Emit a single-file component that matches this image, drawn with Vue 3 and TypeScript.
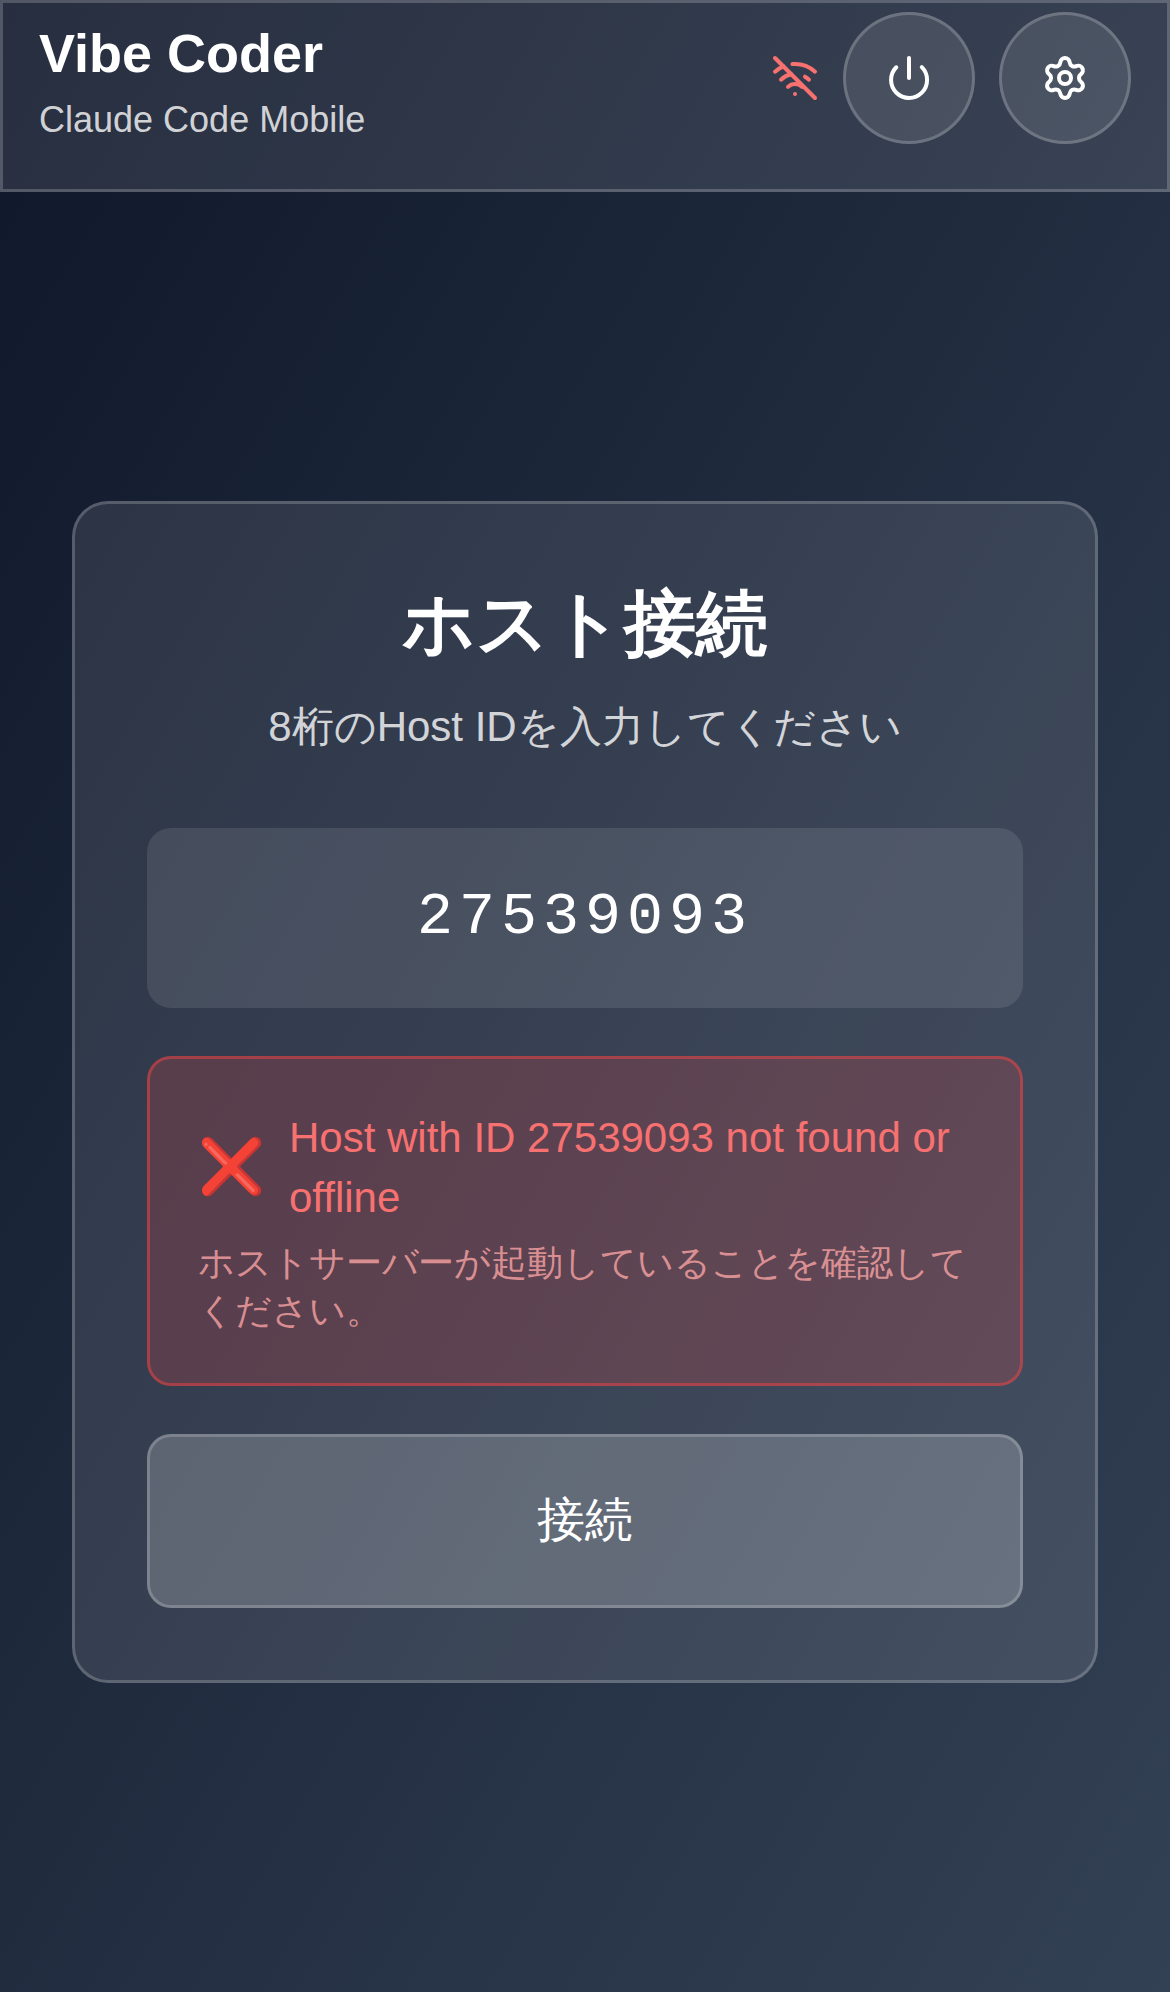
<script setup lang="ts">
import { ref } from 'vue'

const hostId = ref<string>('27539093')
const error = ref<string>(`Host with ID ${hostId.value} not found or offline`)
const hint = 'ホストサーバーが起動していることを確認してください。'
</script>

<template>
  <div class="app">
    <header class="header glass">
      <div class="brand">
        <h1 class="brand-name">Vibe Coder</h1>
        <p class="brand-sub">Claude Code Mobile</p>
      </div>
      <div class="actions">
        <svg class="icon offline" viewBox="0 0 24 24">
          <path d="M12 20h.01" />
          <path d="M8.5 16.429a5 5 0 0 1 7 0" />
          <path d="M5 12.859a10 10 0 0 1 5.17-2.69" />
          <path d="M19 12.859a10 10 0 0 0-2.007-1.523" />
          <path d="M2 8.82a15 15 0 0 1 4.177-2.643" />
          <path d="M22 8.82a15 15 0 0 0-11.288-3.764" />
          <path d="m2 2 20 20" />
        </svg>
        <button class="round glass" type="button" aria-label="Power">
          <svg class="icon" viewBox="0 0 24 24">
            <path d="M12 2v10" />
            <path d="M18.4 6.6a9 9 0 1 1-12.77.04" />
          </svg>
        </button>
        <button class="round glass" type="button" aria-label="Settings">
          <svg class="icon" viewBox="0 0 24 24">
            <path d="M9.671 4.136a2.34 2.34 0 0 1 4.659 0 2.34 2.34 0 0 0 3.319 1.915 2.34 2.34 0 0 1 2.33 4.033 2.34 2.34 0 0 0 0 3.831 2.34 2.34 0 0 1-2.33 4.033 2.34 2.34 0 0 0-3.319 1.915 2.34 2.34 0 0 1-4.659 0 2.34 2.34 0 0 0-3.32-1.915 2.34 2.34 0 0 1-2.33-4.033 2.34 2.34 0 0 0 0-3.831A2.34 2.34 0 0 1 6.35 6.051a2.34 2.34 0 0 0 3.319-1.915" />
            <circle cx="12" cy="12" r="3" />
          </svg>
        </button>
      </div>
    </header>

    <main class="main">
      <section class="card glass">
        <h2 class="title">ホスト接続</h2>
        <p class="lead">8桁のHost IDを入力してください</p>
        <input v-model="hostId" class="host-input" type="text" maxlength="8" />
        <div class="alert">
          <div class="alert-row">
            <span class="alert-icon">❌</span>
            <p class="alert-text">{{ error }}</p>
          </div>
          <p class="alert-hint">{{ hint }}</p>
        </div>
        <button class="connect" type="button">接続</button>
      </section>
    </main>
  </div>
</template>

<style>
body {
  background: #0f172a;
}
</style>

<style scoped>
.app {
  display: flex;
  flex-direction: column;
  height: 1992px;
  overflow: hidden;
  color: #fff;
  font-family: 'Liberation Sans', sans-serif;
  background: linear-gradient(to bottom right, #0f172a, #334155);
}
.app *,
.app {
  box-sizing: border-box;
}
h1,
h2,
p {
  margin: 0;
}
.glass {
  background: rgba(255, 255, 255, 0.1);
  border: 3px solid rgba(255, 255, 255, 0.2);
}
.header {
  display: flex;
  justify-content: space-between;
  align-items: flex-start;
  flex: none;
  height: 192px;
  padding: 9px 36px 45px;
}
.brand-name {
  font-size: 54px;
  line-height: 82px;
  font-weight: 700;
}
.brand-sub {
  font-size: 36px;
  line-height: 51px;
  color: rgba(255, 255, 255, 0.8);
}
.actions {
  display: flex;
  align-items: center;
  gap: 24px;
}
.icon {
  display: block;
  width: 48px;
  height: 48px;
  fill: none;
  stroke: currentColor;
  stroke-width: 2;
  stroke-linecap: round;
  stroke-linejoin: round;
}
.offline {
  color: #f87171;
}
.round {
  display: flex;
  align-items: center;
  justify-content: center;
  width: 132px;
  height: 132px;
  padding: 0;
  border-radius: 50%;
  color: #fff;
}
.main {
  display: flex;
  flex: 1;
  align-items: center;
  padding: 0 72px;
}
.card {
  display: flex;
  flex-direction: column;
  width: 100%;
  padding: 72px;
  border-radius: 36px;
}
.title {
  height: 96px;
  font-size: 72px;
  line-height: 94px;
  font-weight: 700;
  text-align: center;
}
.lead {
  height: 60px;
  margin: 24px 0 72px;
  font-size: 42px;
  line-height: 61px;
  text-align: center;
  color: rgba(255, 255, 255, 0.8);
}
.host-input {
  width: 100%;
  height: 180px;
  padding: 0 48px 2px;
  border: 0;
  outline: 0;
  border-radius: 24px;
  background: rgba(255, 255, 255, 0.1);
  color: #fff;
  font-family: 'Liberation Mono', monospace;
  font-size: 60px;
  letter-spacing: 6px;
  text-align: center;
}
.alert {
  height: 330px;
  margin: 48px 0;
  padding: 48px;
  border: 3px solid rgba(239, 68, 68, 0.5);
  border-radius: 24px;
  background: rgba(239, 68, 68, 0.2);
}
.alert-row {
  display: flex;
  align-items: center;
  gap: 24px;
  height: 120px;
  color: #f87171;
}
.alert-icon {
  margin-bottom: 2px;
  font-size: 54px;
  line-height: 84px;
}
.alert-text {
  margin-top: 2px;
  font-size: 42px;
  line-height: 60px;
}
.alert-hint {
  margin-top: 12px;
  font-size: 36px;
  line-height: 48px;
  letter-spacing: -0.1px;
  color: rgba(252, 165, 165, 0.8);
}
.connect {
  height: 174px;
  padding: 0 0 2px;
  border: 3px solid rgba(255, 255, 255, 0.2);
  border-radius: 24px;
  background: rgba(255, 255, 255, 0.2);
  color: #fff;
  font-family: inherit;
  font-size: 48px;
  font-weight: 500;
  line-height: 72px;
}
</style>
